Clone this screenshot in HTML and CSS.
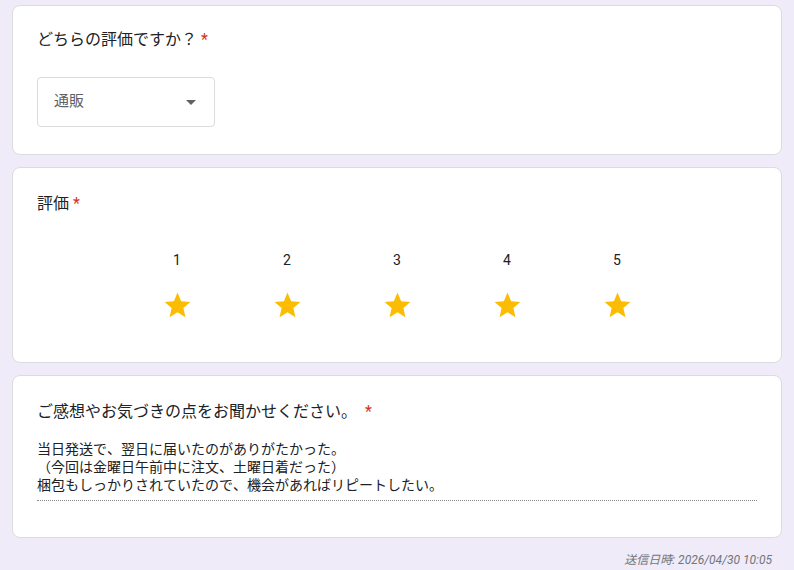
FILE: index.html
```html
<!DOCTYPE html>
<html lang="ja">
<head>
<meta charset="utf-8">
<link rel="stylesheet" href="styles.css">
</head>
<body>
<div class="page">
  <section class="card card-select">
    <div class="q-title">どちらの評価ですか？<span class="req">*</span></div>
    <div class="dropdown">
      <span class="dd-value">通販</span>
      <svg class="dd-arrow" viewBox="0 0 24 24" width="24" height="24"><path d="M7 10l5 5 5-5z"/></svg>
    </div>
  </section>

  <section class="card card-rating">
    <div class="q-title">評価<span class="req">*</span></div>
    <div class="rating">
      <div class="rate-col"><span class="rate-num">1</span><svg class="star" viewBox="0 0 24 24"><path d="M12 17.27L18.18 21l-1.64-7.03L22 9.24l-7.19-.61L12 2 9.19 8.63 2 9.24l5.46 4.73L5.82 21z"/></svg></div>
      <div class="rate-col"><span class="rate-num">2</span><svg class="star" viewBox="0 0 24 24"><path d="M12 17.27L18.18 21l-1.64-7.03L22 9.24l-7.19-.61L12 2 9.19 8.63 2 9.24l5.46 4.73L5.82 21z"/></svg></div>
      <div class="rate-col"><span class="rate-num">3</span><svg class="star" viewBox="0 0 24 24"><path d="M12 17.27L18.18 21l-1.64-7.03L22 9.24l-7.19-.61L12 2 9.19 8.63 2 9.24l5.46 4.73L5.82 21z"/></svg></div>
      <div class="rate-col"><span class="rate-num">4</span><svg class="star" viewBox="0 0 24 24"><path d="M12 17.27L18.18 21l-1.64-7.03L22 9.24l-7.19-.61L12 2 9.19 8.63 2 9.24l5.46 4.73L5.82 21z"/></svg></div>
      <div class="rate-col"><span class="rate-num">5</span><svg class="star" viewBox="0 0 24 24"><path d="M12 17.27L18.18 21l-1.64-7.03L22 9.24l-7.19-.61L12 2 9.19 8.63 2 9.24l5.46 4.73L5.82 21z"/></svg></div>
    </div>
  </section>

  <section class="card card-text">
    <div class="q-title">ご感想やお気づきの点をお聞かせください。 <span class="req">*</span></div>
    <div class="answer">当日発送で、翌日に届いたのがありがたかった。<br>（今回は金曜日午前中に注文、土曜日着だった）<br>梱包もしっかりされていたので、機会があればリピートしたい。</div>
  </section>

  <div class="footer">送信日時: 2026/04/30 10:05</div>
</div>
</body>
</html>
```

FILE: styles.css
```css
html, body {
  margin: 0;
  padding: 0;
  background: #efebf8;
}
body {
  font-family: Roboto, "Noto Sans CJK JP", sans-serif;
  color: #202124;
}
.page {
  padding: 5px 12px 0 12px;
  display: flex;
  flex-direction: column;
  gap: 12px;
}
.card {
  background: #ffffff;
  border: 1px solid #dadce0;
  border-radius: 8px;
  padding: 22px 24px 27px 24px;
}
.q-title {
  font-size: 16px;
  line-height: 24px;
  letter-spacing: 0;
}
.req {
  color: #d93025;
  margin-left: 4px;
}
.dropdown {
  margin-top: 25px;
  width: 178px;
  height: 50px;
  box-sizing: border-box;
  border: 1px solid #dadce0;
  border-radius: 4px;
  display: flex;
  align-items: center;
  justify-content: space-between;
  padding: 0 11px 0 16px;
}
.dd-value {
  font-size: 15px;
  line-height: 20px;
  color: #5f6368;
  margin-top: -2px;
}
.dd-arrow {
  fill: #5f6368;
  display: block;
}
.card-rating {
  padding-top: 24px;
  padding-bottom: 41px;
}
.rating {
  margin-top: 34px;
  display: flex;
  justify-content: center;
}
.rate-col {
  width: 110px;
  display: flex;
  flex-direction: column;
  align-items: center;
  gap: 20px;
}
.rate-num {
  font-size: 14px;
  line-height: 20px;
}
.star {
  width: 31px;
  height: 31px;
  fill: #fbbc04;
  display: block;
}
.card-text {
  padding-top: 24px;
  padding-bottom: 36px;
}
.answer {
  margin-top: 16px;
  font-size: 14px;
  line-height: 18px;
  padding-bottom: 6px;
  border-bottom: 1px dotted #8a8a8a;
  font-kerning: none;
}
.footer {
  margin-top: 2px;
  text-align: right;
  padding-right: 10px;
  font-size: 12px;
  line-height: 16px;
  font-style: italic;
  color: #70757a;
}
```
